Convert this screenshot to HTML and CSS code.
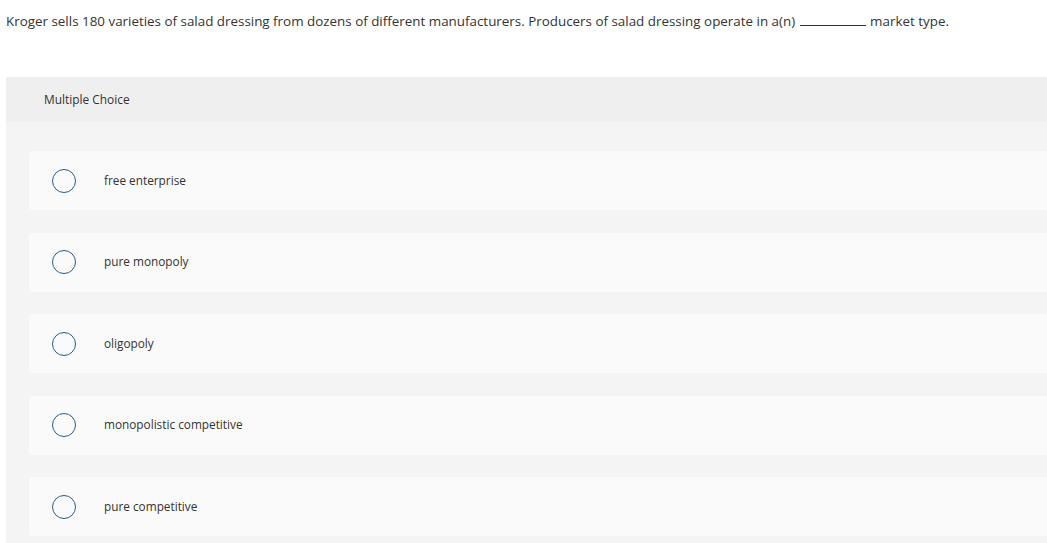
FILE: index.html
```html
<!DOCTYPE html>
<html>
<head>
<meta charset="utf-8">
<link rel="stylesheet" href="styles.css">
</head>
<body>
<div class="page">
  <p class="question">Kroger sells 180 varieties of salad dressing from dozens of different manufacturers. Producers of salad dressing operate in a(n) <span class="blank"></span> market type.</p>
  <section class="mc">
    <header class="mc-head">Multiple Choice</header>
    <div class="mc-body">
      <div class="opt"><span class="radio"></span><span class="label">free enterprise</span></div>
      <div class="opt"><span class="radio"></span><span class="label">pure monopoly</span></div>
      <div class="opt"><span class="radio"></span><span class="label">oligopoly</span></div>
      <div class="opt"><span class="radio"></span><span class="label">monopolistic competitive</span></div>
      <div class="opt"><span class="radio"></span><span class="label">pure competitive</span></div>
    </div>
  </section>
</div>
</body>
</html>
```

FILE: styles.css
```css
html, body {
  margin: 0;
  padding: 0;
  background: #ffffff;
  overflow: hidden;
}
body {
  font-family: "Open Sans", "Liberation Sans", sans-serif;
  color: #333333;
}
.page {
  width: 1080px;
  padding-left: 6px;
}
.question {
  margin: 0;
  padding-top: 12px;
  font-size: 13.4px;
  line-height: 18px;
  height: 65px;
}
.blank {
  display: inline-block;
  width: 66px;
  border-bottom: 1px solid #333;
  vertical-align: baseline;
  margin: 0 1px;
}
.mc {
  background: #f4f4f4;
  padding-bottom: 20px;
}
.mc-head {
  background: #efefef;
  height: 45px;
  box-sizing: border-box;
  padding-bottom: 2px;
  display: flex;
  align-items: center;
  padding-left: 38px;
  font-size: 11.9px;
}
.mc-body {
  padding: 29px 0 0 23px;
  display: flex;
  flex-direction: column;
  gap: 22.5px;
}
.opt {
  background: #fafafa;
  border-radius: 3px 0 0 3px;
  height: 59px;
  display: flex;
  align-items: center;
}
.radio {
  width: 22px;
  height: 22px;
  border: 1.5px solid #2b5c8a;
  border-radius: 50%;
  margin-left: 23px;
  flex: none;
}
.label {
  margin-left: 28px;
  margin-bottom: 2px;
  font-size: 11.8px;
}
```
